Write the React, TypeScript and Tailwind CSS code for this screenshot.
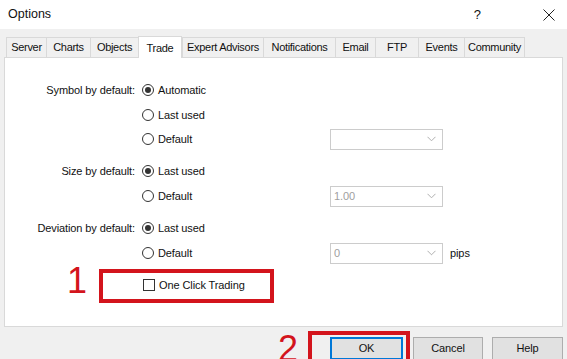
const tabs = [
  { label: "Server", w: "w-[40px]" },
  { label: "Charts", w: "w-[44px]" },
  { label: "Objects", w: "w-[48px]" },
  { label: "Trade", w: "w-[44px]", active: true },
  { label: "Expert Advisors", w: "w-[81px]" },
  { label: "Notifications", w: "w-[72px]" },
  { label: "Email", w: "w-[40px]" },
  { label: "FTP", w: "w-[43px]" },
  { label: "Events", w: "w-[46px]" },
  { label: "Community", w: "w-[61px]" },
];

function Radio({ checked, label }: { checked?: boolean; label: string }) {
  return (
    <div className="flex items-center gap-[4px]">
      <span className="w-[12px] h-[12px] rounded-full border border-[#333] flex items-center justify-center bg-white">
        {checked && <span className="w-[6px] h-[6px] rounded-full bg-[#333]" />}
      </span>
      <span>{label}</span>
    </div>
  );
}

function Combo({ value }: { value?: string }) {
  return (
    <div className="w-[113px] h-[21px] border border-[#cccccc] bg-white flex items-center justify-between pl-[3px] pr-[6px] text-[#a0a0a0]">
      <span>{value ?? ""}</span>
      <svg width="9" height="6" viewBox="0 0 9 6">
        <path d="M0.5 0.8 L4.5 4.8 L8.5 0.8" fill="none" stroke="#b0b0b0" strokeWidth="1" />
      </svg>
    </div>
  );
}

function Row({
  label,
  children,
  combo,
  extra,
  className = "",
}: {
  label?: string;
  children: React.ReactNode;
  combo?: React.ReactNode;
  extra?: React.ReactNode;
  className?: string;
}) {
  return (
    <div className={"flex items-center h-[24px] " + className}>
      <div className="w-[137px] text-right pr-[7px]">{label}</div>
      <div className="w-[188px]">{children}</div>
      {combo}
      {extra}
    </div>
  );
}

export default function App() {
  return (
    <div
      className="w-[567px] h-[359px] overflow-hidden bg-[#f0f0f0] text-[11px] tracking-[-0.1px] text-[#111] relative"
      style={{ fontFamily: '"Liberation Sans", Arial, sans-serif' }}
    >
      {/* title bar */}
      <div className="h-[29px] bg-white flex items-center justify-between pl-[8px] pr-[12px]">
        <span className="text-[12.5px] tracking-normal">Options</span>
        <div className="flex items-center gap-[62px]">
          <span className="text-[13px]">?</span>
          <svg width="12" height="12" viewBox="0 0 12 12">
            <path d="M0.5 0.5 L11.5 11.5 M11.5 0.5 L0.5 11.5" stroke="#222" strokeWidth="1" />
          </svg>
        </div>
      </div>

      {/* tabs */}
      <div className="flex items-end h-[28px] pl-[6px] tracking-[-0.3px]">
        {tabs.map((t) =>
          t.active ? (
            <div
              key={t.label}
              className={`${t.w} h-[22px] -mb-[1px] bg-white border border-b-0 border-[#d9d9d9] flex items-start justify-center pt-[3px] relative z-10`}
            >
              {t.label}
            </div>
          ) : (
            <div
              key={t.label}
              className={`${t.w} h-[20px] bg-[#f0f0f0] border border-r-0 last:border-r border-b-0 border-[#d9d9d9] flex items-center justify-center whitespace-nowrap`}
            >
              {t.label}
            </div>
          )
        )}
      </div>

      {/* panel */}
      <div className="ml-[4px] w-[559px] h-[270px] bg-white border border-[#d9d9d9] pt-[20px]">
        <Row label="Symbol by default:">
          <Radio checked label="Automatic" />
        </Row>
        <Row className="mt-[1px]">
          <Radio label="Last used" />
        </Row>
        <Row combo={<Combo />}>
          <Radio label="Default" />
        </Row>

        <Row label="Size by default:" className="mt-[8px]">
          <Radio checked label="Last used" />
        </Row>
        <Row className="mt-[1px]" combo={<Combo value="1.00" />}>
          <Radio label="Default" />
        </Row>

        <Row label="Deviation by default:" className="mt-[8px]">
          <Radio checked label="Last used" />
        </Row>
        <Row
          className="mt-[1px]"
          combo={<Combo value="0" />}
          extra={<span className="ml-[7px]">pips</span>}
        >
          <Radio label="Default" />
        </Row>

        <div className="relative mt-[8px] h-[24px] flex items-center pl-[138px]">
          <span className="w-[12px] h-[12px] border border-[#333] bg-white" />
          <span className="ml-[4px]">One Click Trading</span>
          <div className="absolute left-[94px] top-[-4px] w-[175px] h-[34px] border-[4px] border-[#d3141c]" />
          <span className="absolute left-[62px] top-[-10px] text-[36px] leading-none text-[#d3141c]">1</span>
        </div>
      </div>

      {/* buttons */}
      <div className="relative flex justify-end gap-[9px] pr-[4px] mt-[10px]">
        <button className="w-[73px] h-[23px] bg-[#e1e1e1] border-2 border-[#0078d7] mr-[1px]">OK</button>
        <button className="w-[70px] h-[23px] bg-[#e1e1e1] border border-[#adadad]">Cancel</button>
        <button className="w-[71px] h-[23px] bg-[#e1e1e1] border border-[#adadad]">Help</button>
        <div className="absolute left-[308px] top-[-6px] w-[102px] h-[34px] border-[4px] border-[#d3141c]" />
        <span className="absolute left-[278px] top-[-6px] text-[36px] leading-none text-[#d3141c]">2</span>
      </div>
    </div>
  );
}
